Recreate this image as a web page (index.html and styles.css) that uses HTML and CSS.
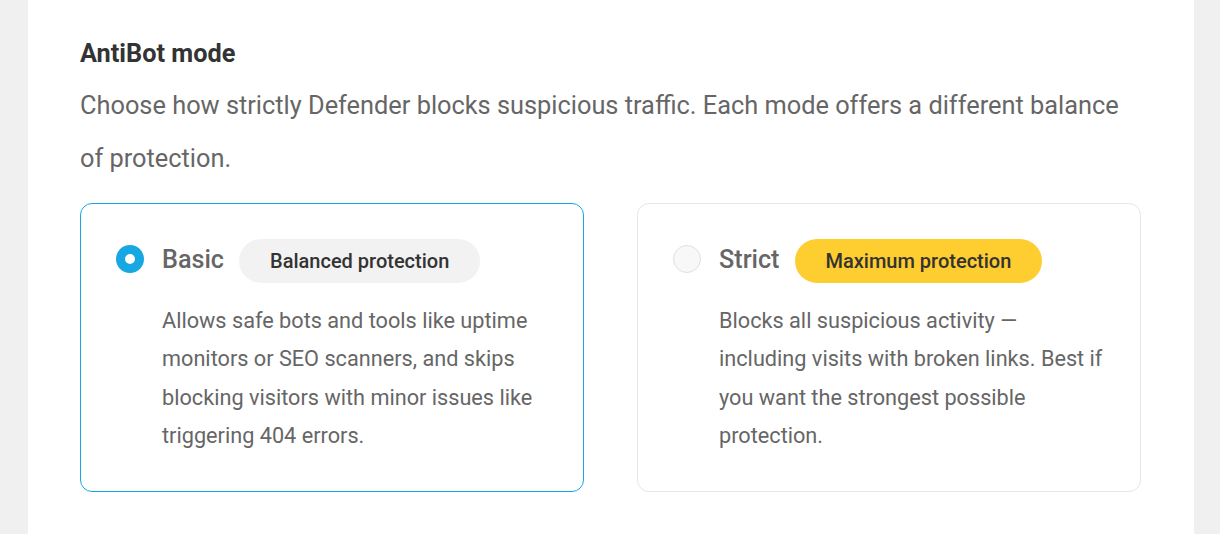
FILE: index.html
```html
<!DOCTYPE html>
<html lang="en">
<head>
    <meta charset="UTF-8">
    <meta name="viewport" content="width=device-width, initial-scale=1.0">
    <title>AntiBot mode</title>
    <link rel="stylesheet" href="styles.css">
</head>
<body>
    <div class="panel">
        <h3 class="title">AntiBot mode</h3>
        <p class="desc">Choose how strictly Defender blocks suspicious traffic. Each mode offers a different balance of protection.</p>

        <div class="modes">
            <label class="mode active">
                <span class="radio checked"></span>
                <div class="mode-body">
                    <div class="mode-head">
                        <span class="mode-name">Basic</span>
                        <span class="tag">Balanced protection</span>
                    </div>
                    <p class="mode-text">Allows safe bots and tools like uptime monitors or SEO scanners, and skips blocking visitors with minor issues like triggering 404 errors.</p>
                </div>
            </label>

            <label class="mode">
                <span class="radio"></span>
                <div class="mode-body">
                    <div class="mode-head">
                        <span class="mode-name">Strict</span>
                        <span class="tag tag-yellow">Maximum protection</span>
                    </div>
                    <p class="mode-text">Blocks all suspicious activity — including visits with broken links. Best if you want the strongest possible protection.</p>
                </div>
            </label>
        </div>
    </div>
</body>
</html>
```

FILE: styles.css
```css
body {
    margin: 0;
    background-color: #f0f0f0;
    font-family: Roboto, "Liberation Sans", sans-serif;
}
.panel {
    background-color: #fff;
    margin: 0 26px 0 28px;
    padding: 39px 53px 42px 52px;
    min-height: 453px;
}
.title {
    margin: 0;
    font-size: 25.3px;
    line-height: 30px;
    font-weight: 700;
    color: #333;
}
.desc {
    margin: 10px 0 18px;
    font-size: 25.35px;
    line-height: 53px;
    color: #666;
}
.modes {
    display: grid;
    grid-template-columns: 1fr 1fr;
    gap: 53px;
}
.mode {
    display: flex;
    gap: 18px;
    padding: 35px 36px 35px 35px;
    border: 1px solid #e6e6e6;
    border-radius: 12px;
    cursor: pointer;
}
.mode.active {
    border-color: #17a8e3;
}
.radio {
    flex: none;
    box-sizing: border-box;
    width: 28px;
    height: 28px;
    margin-top: 6px;
    border: 1px solid #e0e0e0;
    border-radius: 50%;
    background-color: #f8f8f8;
}
.radio.checked {
    border: 9px solid #17a8e3;
    background-color: #fff;
}
.mode-head {
    display: flex;
    align-items: center;
    gap: 15px;
}
.mode-name {
    font-size: 25.2px;
    font-weight: 500;
    color: #666;
    margin-top: -4px;
}
.tag {
    padding: 0 31px;
    height: 44px;
    line-height: 44px;
    border-radius: 22px;
    background-color: #f2f2f2;
    font-size: 20px;
    font-weight: 500;
    color: #333;
}
.tag-yellow {
    background-color: #fecd2f;
}
.mode-text {
    margin: 19px 0 0;
    font-size: 21.7px;
    line-height: 38.4px;
    color: #666;
}
```
